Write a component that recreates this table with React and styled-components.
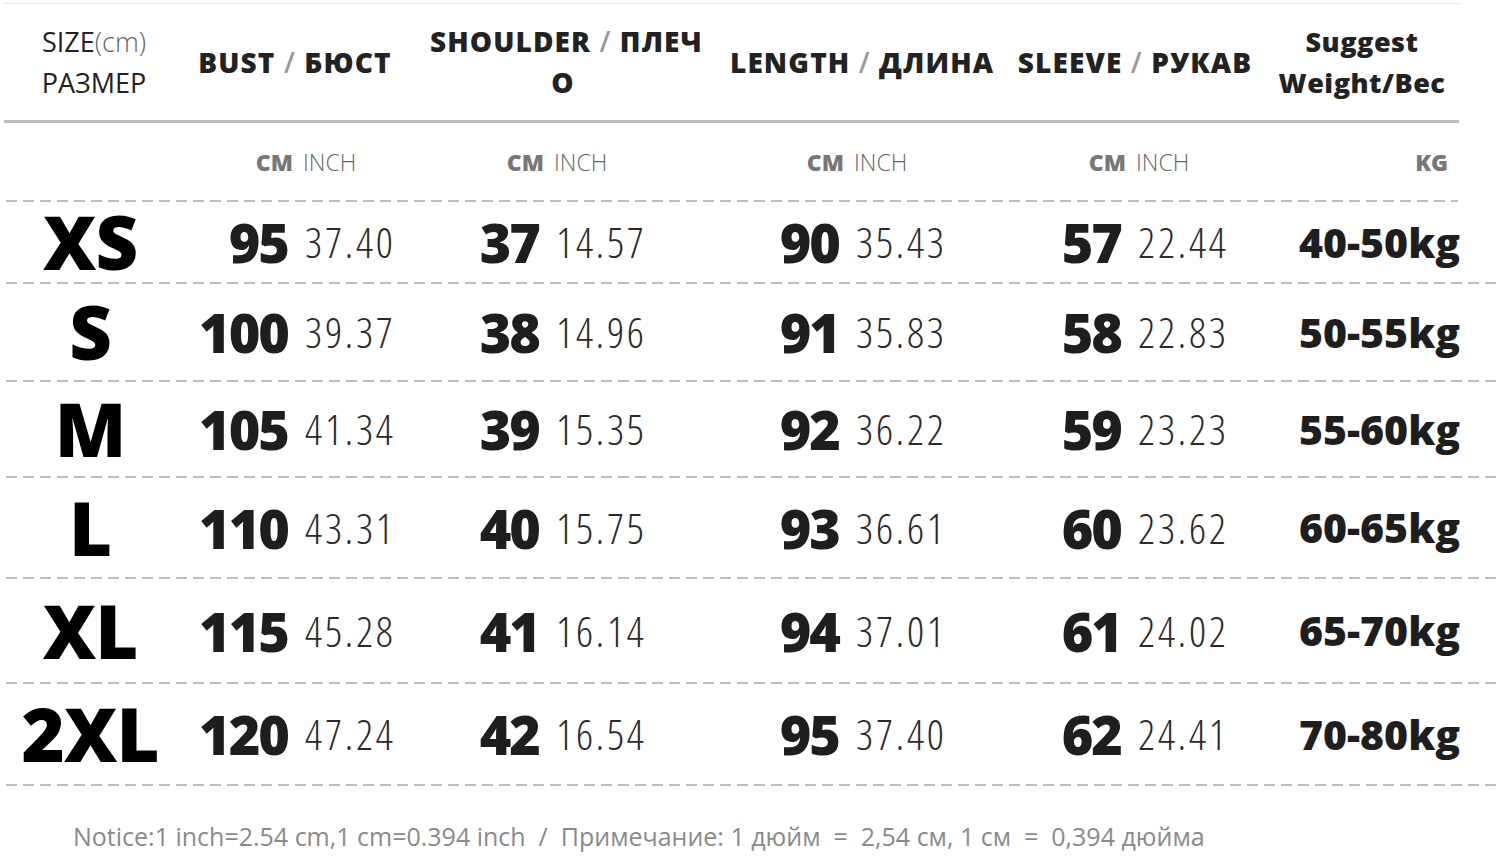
import React from 'react'
import styled, { createGlobalStyle } from 'styled-components'

const GlobalStyle = createGlobalStyle`
  body {
    margin: 0;
    background: #ffffff;
    font-family: "Open Sans", "Noto Sans", sans-serif;
  }
`

const COLUMNS = '180px 107px 143px 108px 192px 108px 172px 110px 150px 190px'

const Page = styled.div`
  width: 1500px;
  height: 856px;
  padding-top: 3px;
  box-sizing: border-box;
  overflow: hidden;
`

const HeaderBlock = styled.div`
  width: 1455px;
  border-top: 1px solid #e4e4e4;
  border-bottom: 3px solid #bcbcbc;
  margin-left: 4px;
`

const HeaderRow = styled.div`
  display: grid;
  grid-template-columns: 176px 250px 300px 280px 260px 190px;
  height: 116px;
  align-items: center;
`

const SizeHead = styled.div`
  text-align: center;
  padding-left: 4px;
  font-size: 27px;
  line-height: 41px;
  color: #222;
`

const Unit = styled.span`
  color: #666;
  font-weight: 300;
`

const ColHead = styled.div`
  text-align: center;
  padding-right: ${p => p.$shift || 20}px;
  font-size: ${p => (p.$small ? 27 : 28)}px;
  line-height: 41px;
  font-weight: 800;
  color: #222;
  letter-spacing: ${p => (p.$small ? 0.5 : 1.1)}px;
  white-space: nowrap;
`

const Slash = styled.span`
  color: #9a9a9a;
  font-weight: 600;
`

const Grid = styled.div`
  display: grid;
  grid-template-columns: ${COLUMNS};
  align-items: center;
  height: ${p => p.$h}px;
`

const UnitBold = styled.div`
  justify-self: end;
  margin-right: -6px;
  font-size: 23px;
  font-weight: 800;
  color: #777;
`

const UnitLight = styled.div`
  padding-left: 16px;
  font-size: 23px;
  font-weight: 300;
  color: #666;
`

const UnitKg = styled(UnitBold)`
  margin-right: 12px;
`

const Divider = styled.div`
  height: 2px;
  width: ${p => p.$w || 1490}px;
  margin-left: 6px;
  background: repeating-linear-gradient(to right, #bdbdbd 0 11px, transparent 11px 17px);
`

const SizeLabel = styled.div`
  text-align: center;
  font-size: 74px;
  font-weight: 800;
  color: #000;
  letter-spacing: -1px;
  line-height: 1;
`

const Cm = styled.div`
  justify-self: end;
  margin-right: -1px;
  font-size: 54px;
  font-weight: 800;
  letter-spacing: -2px;
  color: #1e1e1e;
  line-height: 1;
`

const Inch = styled.div`
  padding-left: 18px;
  font-size: 42px;
  font-weight: 300;
  font-stretch: 75%;
  letter-spacing: 2.8px;
  color: #2a2a2a;
  line-height: 1;
`

const Weight = styled.div`
  justify-self: end;
  font-size: 41px;
  font-weight: 800;
  color: #1e1e1e;
  line-height: 1;
`

const Notice = styled.div`
  margin-top: 33px;
  padding-left: 73px;
  font-size: 25px;
  color: #8a8a8a;
  white-space: pre;
`

const rows = [
  { size: 'XS', h: 80, bust: ['95', '37.40'], shoulder: ['37', '14.57'], length: ['90', '35.43'], sleeve: ['57', '22.44'], weight: '40-50kg', w: 1452 },
  { size: 'S', h: 96, bust: ['100', '39.37'], shoulder: ['38', '14.96'], length: ['91', '35.83'], sleeve: ['58', '22.83'], weight: '50-55kg' },
  { size: 'M', h: 94, bust: ['105', '41.34'], shoulder: ['39', '15.35'], length: ['92', '36.22'], sleeve: ['59', '23.23'], weight: '55-60kg' },
  { size: 'L', h: 99, bust: ['110', '43.31'], shoulder: ['40', '15.75'], length: ['93', '36.61'], sleeve: ['60', '23.62'], weight: '60-65kg' },
  { size: 'XL', h: 103, bust: ['115', '45.28'], shoulder: ['41', '16.14'], length: ['94', '37.01'], sleeve: ['61', '24.02'], weight: '65-70kg' },
  { size: '2XL', h: 100, bust: ['120', '47.24'], shoulder: ['42', '16.54'], length: ['95', '37.40'], sleeve: ['62', '24.41'], weight: '70-80kg' },
]

function Measure({ pair }) {
  return (
    <>
      <Cm>{pair[0]}</Cm>
      <Inch>{pair[1]}</Inch>
    </>
  )
}

export default function App() {
  return (
    <Page>
      <GlobalStyle />
      <HeaderBlock>
        <HeaderRow>
          <SizeHead>
            SIZE<Unit>(cm)</Unit>
            <br />
            РАЗМЕР
          </SizeHead>
          <ColHead>BUST <Slash>/</Slash> БЮСТ</ColHead>
          <ColHead $shift={34}>
            SHOULDER <Slash>/</Slash> ПЛЕЧ
            <br />
            О
          </ColHead>
          <ColHead>LENGTH <Slash>/</Slash> ДЛИНА</ColHead>
          <ColHead $shift={10}>SLEEVE <Slash>/</Slash> РУКАВ</ColHead>
          <ColHead $shift={6} $small>
            Suggest
            <br />
            Weight/Вес
          </ColHead>
        </HeaderRow>
      </HeaderBlock>

      <Grid $h={77}>
        <div />
        <UnitBold>CM</UnitBold>
        <UnitLight>INCH</UnitLight>
        <UnitBold>CM</UnitBold>
        <UnitLight>INCH</UnitLight>
        <UnitBold>CM</UnitBold>
        <UnitLight>INCH</UnitLight>
        <UnitBold>CM</UnitBold>
        <UnitLight>INCH</UnitLight>
        <UnitKg>KG</UnitKg>
      </Grid>

      {rows.map(r => (
        <React.Fragment key={r.size}>
          <Divider $w={r.w} />
          <Grid $h={r.h}>
            <SizeLabel>{r.size}</SizeLabel>
            <Measure pair={r.bust} />
            <Measure pair={r.shoulder} />
            <Measure pair={r.length} />
            <Measure pair={r.sleeve} />
            <Weight>{r.weight}</Weight>
          </Grid>
        </React.Fragment>
      ))}
      <Divider />

      <Notice>{'Notice:1 inch=2.54 cm,1 cm=0.394 inch  /  Примечание: 1 дюйм  =  2,54 см, 1 см  =  0,394 дюйма'}</Notice>
    </Page>
  )
}
